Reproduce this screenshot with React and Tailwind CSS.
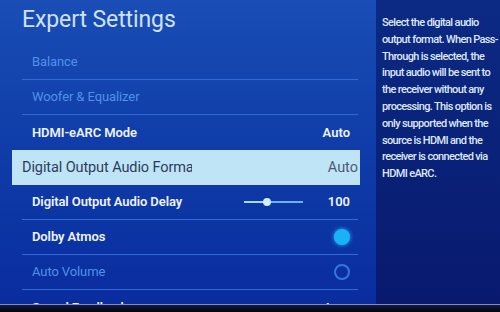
import React from "react";

const dim = "text-[#4d93e8] font-normal";
const bright = "text-[#eef3ff] font-semibold";

const Row = ({ label, tone, right, border = true }) => (
	<div
		className={`h-[35px] shrink-0 flex items-center justify-between pl-[10px] pr-[8px] ${
			border ? "border-b border-[#2f6bd6]" : ""
		}`}
	>
		<span className={`text-[13px] tracking-[-0.1px] ${tone}`}>{label}</span>
		{right}
	</div>
);

const Value = ({ children }) => (
	<span className="text-[13px] font-semibold text-[#eef3ff]">{children}</span>
);

const Slider = () => (
	<div className="flex items-center gap-[25px]">
		<div className="relative w-[59px] h-[2px] bg-[#6fb4f2]">
			<div className="absolute left-0 top-0 h-[2px] w-[23px] bg-[#a8dcff]" />
			<div className="absolute left-[19px] top-[-3px] w-[8px] h-[8px] rounded-full bg-[#cfeeff]" />
		</div>
		<Value>100</Value>
	</div>
);

const Toggle = ({ on }) =>
	on ? (
		<div className="w-[16px] h-[16px] rounded-full bg-[#19b2f5] shadow-[0_0_4px_#27b8ff]" />
	) : (
		<div className="w-[16px] h-[16px] rounded-full border-2 border-[#3676e0]" />
	);

const help = [
	"Select the digital audio",
	"output format. When Pass-",
	"Through is selected, the",
	"input audio will be sent to",
	"the receiver without any",
	"processing. This option is",
	"only supported when the",
	"source is HDMI and the",
	"receiver is connected via",
	"HDMI eARC.",
];

export default function App() {
	return (
		<div
			className="w-[500px] h-[312px] overflow-hidden flex flex-col bg-[#070a24]"
			style={{ fontFamily: "Roboto, 'Open Sans', sans-serif" }}
		>
			<div className="flex h-[304px] shrink-0">
				{/* settings list */}
				<div className="w-[376px] h-full bg-gradient-to-b from-[#1a4db6] via-[#0f3ca8] to-[#0a2c9f] flex flex-col overflow-hidden">
					<div className="h-[45px] shrink-0 pl-[22px] pt-[6px]">
						<h1 className="text-[23px] leading-[28px] text-[#cfe1f7] tracking-[-0.1px]">
							Expert Settings
						</h1>
					</div>
					<div className="ml-[22px] w-[336px] flex flex-col shrink-0">
						<Row label="Balance" tone={dim} />
						<Row label="Woofer & Equalizer" tone={dim} />
						<Row
							label="HDMI-eARC Mode"
							tone={bright}
							right={<Value>Auto</Value>}
							border={false}
						/>
						<div className="-ml-[10px] w-[348px] h-[35px] shrink-0 bg-[#bfe4f5] flex items-center justify-between pl-[10px] pr-[2px]">
							<span className="w-[170px] overflow-hidden whitespace-nowrap text-[14.5px] text-[#2c3c5c] tracking-[-0.1px]">
								Digital Output Audio Format
							</span>
							<span className="text-[14.5px] text-[#4b5b74]">Auto</span>
						</div>
						<Row
							label="Digital Output Audio Delay"
							tone={bright}
							right={<Slider />}
						/>
						<Row label="Dolby Atmos" tone={bright} right={<Toggle on />} />
						<Row label="Auto Volume" tone={dim} right={<Toggle />} />
						<Row label="Sound Feedback" tone={bright} right={<Value>Low</Value>} border={false} />
					</div>
				</div>
				{/* help panel */}
				<div className="flex-1 h-full overflow-hidden bg-gradient-to-b from-[#0c2a84] to-[#08196e] pl-[6px] pt-[15px]">
					{help.map((line) => (
						<p
							key={line}
							className="whitespace-nowrap text-[11px] leading-[16.8px] font-medium tracking-[-0.65px] text-[#dde7f6]"
						>
							{line}
						</p>
					))}
				</div>
			</div>
			<div className="h-[1px] shrink-0 bg-[#7d8cc4]" />
			<div className="flex-1 bg-gradient-to-b from-[#141a3a] to-[#04050e]" />
		</div>
	);
}
